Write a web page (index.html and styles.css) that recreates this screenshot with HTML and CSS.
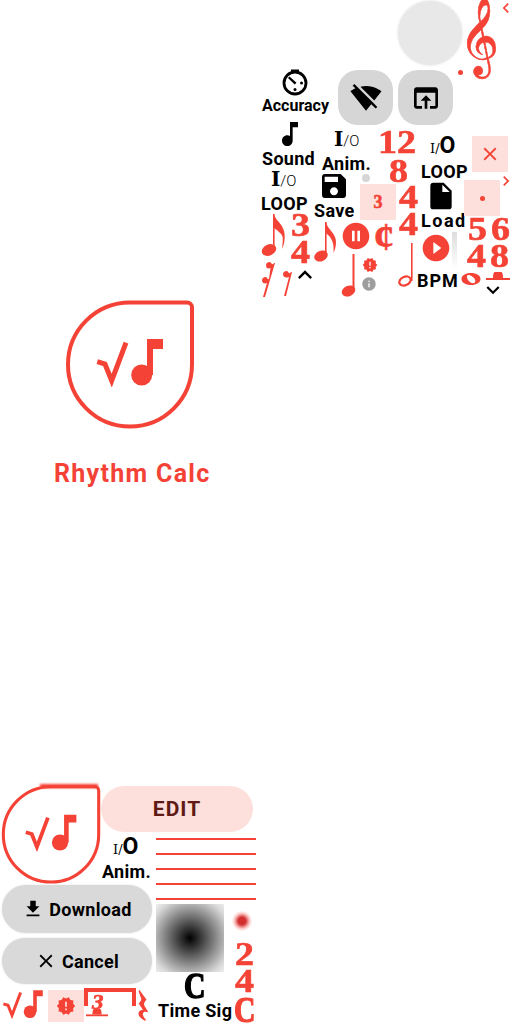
FILE: index.html
```html
<!DOCTYPE html>
<html lang="en">
<head>
    <meta charset="UTF-8">
    <title>Rhythm Calc</title>
    <link rel="stylesheet" href="styles.css">
</head>
<body>
    <svg class="defs" aria-hidden="true">
        <symbol id="i-note" viewBox="0 0 24 24"><path d="M12 3v10.55c-.59-.34-1.27-.55-2-.55-2.21 0-4 1.79-4 4s1.79 4 4 4 4-1.79 4-4V7h4V3h-6z"/></symbol>
        <symbol id="i-wifi" viewBox="0 0 24 24"><path d="M23.64 7c-.45-.34-4.93-4-11.64-4-1.5 0-2.89.19-4.15.48L18.18 13.8 23.64 7zm-6.6 8.22L3.27 1.44 2 2.72l2.05 2.06C1.91 5.76.59 6.82.36 7l11.63 14.49.01.01.01-.01 3.9-4.86 3.32 3.32 1.27-1.27-3.46-3.46z"/></symbol>
        <symbol id="i-open" viewBox="0 0 24 24"><path d="M19 4H5c-1.11 0-2 .9-2 2v12c0 1.1.89 2 2 2h4v-2H5V8h14v10h-4v2h4c1.1 0 2-.9 2-2V6c0-1.1-.89-2-2-2zm-7 6l-4 4h3v6h2v-6h3l-4-4z"/></symbol>
        <symbol id="i-save" viewBox="0 0 24 24"><path d="M17 3H5c-1.11 0-2 .9-2 2v14c0 1.1.89 2 2 2h14c1.1 0 2-.9 2-2V7l-4-4zm-5 16c-1.66 0-3-1.34-3-3s1.34-3 3-3 3 1.34 3 3-1.34 3-3 3zm3-10H5V5h10v4z"/></symbol>
        <symbol id="i-file" viewBox="0 0 24 24"><path d="M6 2c-1.1 0-1.99.9-1.99 2L4 20c0 1.1.89 2 1.99 2H18c1.1 0 2-.9 2-2V8l-6-6H6zm7 7V3.5L18.5 9H13z"/></symbol>
        <symbol id="i-pause" viewBox="0 0 24 24"><path d="M12 2C6.48 2 2 6.48 2 12s4.48 10 10 10 10-4.48 10-10S17.52 2 12 2zm-1 14H9V8h2v8zm4 0h-2V8h2v8z"/></symbol>
        <symbol id="i-play" viewBox="0 0 24 24"><path d="M12 2C6.48 2 2 6.48 2 12s4.48 10 10 10 10-4.48 10-10S17.52 2 12 2zm-2 14.5v-9l6 4.5-6 4.5z"/></symbol>
        <symbol id="i-close" viewBox="0 0 24 24"><path d="M19 6.41L17.59 5 12 10.59 6.41 5 5 6.41 10.59 12 5 17.59 6.41 19 12 13.41 17.59 19 19 17.59 13.41 12z"/></symbol>
        <symbol id="i-download" viewBox="0 0 24 24"><path d="M19 9h-4V3H9v6H5l7 7 7-7zM5 18v2h14v-2H5z"/></symbol>
        <symbol id="i-info" viewBox="0 0 24 24"><path d="M12 2C6.48 2 2 6.48 2 12s4.48 10 10 10 10-4.48 10-10S17.52 2 12 2zm1 15h-2v-6h2v6zm0-8h-2V7h2v2z"/></symbol>
        <symbol id="i-badge" viewBox="0 0 24 24"><path d="M23 12l-2.44-2.78.34-3.68-3.61-.82-1.89-3.18L12 3 8.6 1.54 6.71 4.72l-3.61.81.34 3.68L1 12l2.44 2.78-.34 3.69 3.61.82 1.89 3.18L12 21l3.4 1.46 1.89-3.18 3.61-.82-.34-3.68L23 12zm-10 5h-2v-2h2v2zm0-4h-2V7h2v6z"/></symbol>
        <symbol id="i-up" viewBox="0 0 24 24"><path d="M7.41 15.41L12 10.83l4.59 4.58L18 14l-6-6-6 6z"/></symbol>
        <symbol id="i-down" viewBox="0 0 24 24"><path d="M7.41 8.59L12 13.17l4.59-4.58L18 10l-6 6-6-6z"/></symbol>
        <symbol id="i-left" viewBox="0 0 24 24"><path d="M15.41 7.41L14 6l-6 6 6 6 1.41-1.41L10.83 12z"/></symbol>
        <symbol id="i-right" viewBox="0 0 24 24"><path d="M10 6L8.59 7.41 13.17 12l-4.58 4.59L10 18l6-6z"/></symbol>
        <symbol id="i-timer" viewBox="0 0 28 28">
            <circle cx="14" cy="15" r="11" fill="none" stroke="currentColor" stroke-width="2.800"/>
            <path d="M10 1.500h8v3h-8zM8.500 8.500l7 6.200-1.800 1.800-6.700-6.500z"/>
            <circle cx="14" cy="21.500" r="1.500"/><circle cx="20.500" cy="15" r="1.500"/>
        </symbol>
        <symbol id="i-logo" viewBox="0 0 128 130">
            <path d="M64 3.500H121a5 5 0 0 1 5 5V65.500A62 62 0 1 1 64 3.500Z" fill="none" stroke="currentColor" stroke-width="4"/>
            <use href="#i-sqrt" x="29" y="38" width="70" height="50"/>
        </symbol>
        <symbol id="i-sqrt" viewBox="0 0 70 50">
            <path d="M2.300 24.700 10 27l6.700 16.700L31 5.700" fill="none" stroke="currentColor" stroke-width="5"/>
            <path d="M52 2h16v10h-10v26h-6z"/>
            <circle cx="46.700" cy="38" r="10.500"/>
        </symbol>
        <symbol id="i-n4" viewBox="0 0 16 44"><rect x="11.500" y="0" width="2" height="38"/><ellipse cx="7.500" cy="37" rx="7" ry="5.200" transform="rotate(-25 7.500 37)"/></symbol>
        <symbol id="i-n8" viewBox="0 0 24 42"><rect x="11" y="0" width="1.600" height="34"/><ellipse cx="7" cy="34" rx="7" ry="5.200" transform="rotate(-25 7 34)"/><path d="M12 0c1 7 10 11 10 20 0 4-1 8-2.500 11 .8-10-1.500-15-7.500-20z"/></symbol>
        <symbol id="i-n16" viewBox="0 0 26 44"><rect x="12" y="0" width="1.600" height="36"/><ellipse cx="8" cy="36" rx="7.500" ry="5.500" transform="rotate(-25 8 36)"/><path d="M13 0c1 6 8 9 10 17 1.500 6 .5 13-2 18 .5-6 1.500-11 0-15-1.500-3-4.500-5-8-8z"/><path d="M13 9c2 4 7 6 9 11v3c-2-4-5-6-9-9z"/></symbol>
        <symbol id="i-n2" viewBox="0 0 18 46"><rect x="14" y="0" width="1.600" height="38"/><ellipse cx="8" cy="38" rx="6" ry="4.200" transform="rotate(-25 8 38)" fill="none" stroke="currentColor" stroke-width="2.200"/></symbol>
        <symbol id="i-n1" viewBox="0 0 20 14"><path fill-rule="evenodd" d="M10 1c5.500 0 9.500 2.500 9.500 6s-4 6-9.500 6S.5 10.500.5 7 4.500 1 10 1zM7 3c-1.500.5-1.500 2.500 0 5s4 3.500 6 3 1.500-3 0-5-4.500-3.500-6-3z"/></symbol>
        <symbol id="i-hrest" viewBox="0 0 24 14"><rect x="0" y="8" width="24" height="2"/><path d="M7 8c0-5 1-6 2-6h6c1 0 2 1 2 6z"/></symbol>
        <symbol id="i-r8" viewBox="0 0 10 26"><path d="M1 4a3 3 0 0 1 5.500-1.500c.8 1 1.500 1.200 2.500-.5h1L4 26H2L7 7C5 8 1 8 1 4z"/></symbol>
        <symbol id="i-r16" viewBox="0 0 14 36"><path d="M4 4a3 3 0 0 1 5.500-1.500c.8 1 1.500 1.200 2.500-.5h1L3 36H1l4-14c-2 1-5 .5-5-3a3 3 0 0 1 5.500-1.500c.5.600 1 .8 1.500.5L8.500 7C6.500 8 4 7.500 4 4z"/></symbol>
        <symbol id="i-r4" viewBox="0 0 12 36"><path d="M2 0l8 11c-3 3-4 5-1 9l3 5c-3-1-7-1-6 3 .3 2 2 4 3 5v2C4 33 .5 29 1 26c.5-3 3-4 5-3.500L1 15c3-2 4-5 2-8L1 1z"/></symbol>
    </svg>

    <!-- Hoja de recursos: cada pieza tiene su sitio en el lienzo -->
    <main class="sheet">
        <div class="blob"></div>
        <span class="glyph clef">𝄞</span>
        <span class="reddot dot-clef"></span>
        <svg class="ic red chev-left"><use href="#i-left"/></svg>
        <svg class="ic red chev-right"><use href="#i-right"/></svg>

        <svg class="ic timer"><use href="#i-timer"/></svg>
        <span class="lbl accuracy">Accuracy</span>
        <div class="tile tile-wifi"><svg class="ic tile-ic"><use href="#i-wifi"/></svg></div>
        <div class="tile tile-open"><svg class="ic tile-ic"><use href="#i-open"/></svg></div>

        <svg class="ic note-sound"><use href="#i-note"/></svg>
        <span class="lbl sound">Sound</span>
        <span class="io io-a"><b>I</b>/O</span>
        <span class="lbl anim-a">Anim.</span>
        <span class="num n12">12</span>
        <span class="num n8a">8</span>
        <span class="oi oi-a">I/<b>O</b></span>
        <span class="lbl loop-a">LOOP</span>
        <div class="pink box-x"><svg class="ic red x-ic"><use href="#i-close"/></svg></div>
        <span class="graydot"></span>
        <svg class="ic save-ic"><use href="#i-save"/></svg>
        <span class="io io-b"><b>I</b>/O</span>
        <span class="lbl loop-b">LOOP</span>
        <span class="lbl save">Save</span>
        <div class="pink box-3"><span class="num small3">3</span></div>
        <span class="num n4a">4</span>
        <span class="num n4b">4</span>
        <svg class="ic file-ic"><use href="#i-file"/></svg>
        <span class="lbl load">Load</span>
        <div class="pink box-dot"><span class="reddot"></span></div>
        <span class="num n5">5</span>
        <span class="num n6">6</span>
        <span class="num n4c">4</span>
        <span class="num n8b">8</span>
        <span class="num n3">3</span>
        <span class="num n4d">4</span>

        <svg class="ic red s-n16"><use href="#i-n16"/></svg>
        <svg class="ic red s-n8"><use href="#i-n8"/></svg>
        <svg class="ic red pause"><use href="#i-pause"/></svg>
        <span class="num cut">¢</span>
        <svg class="ic red play"><use href="#i-play"/></svg>
        <div class="fade"></div>
        <svg class="ic red s-n2"><use href="#i-n2"/></svg>
        <svg class="ic red s-n4"><use href="#i-n4"/></svg>
        <svg class="ic red badge-a"><use href="#i-badge"/></svg>
        <svg class="ic info"><use href="#i-info"/></svg>
        <svg class="ic red r16"><use href="#i-r16"/></svg>
        <svg class="ic red r8"><use href="#i-r8"/></svg>
        <svg class="ic up"><use href="#i-up"/></svg>
        <span class="lbl bpm">BPM</span>
        <svg class="ic red whole"><use href="#i-n1"/></svg>
        <svg class="ic red hrest-a"><use href="#i-hrest"/></svg>
        <svg class="ic down"><use href="#i-down"/></svg>

        <svg class="ic red logo-big"><use href="#i-logo"/></svg>
        <span class="title">Rhythm Calc</span>

        <div class="logo-bar"></div>
        <svg class="ic red logo-small"><use href="#i-logo"/></svg>
        <button class="pill edit">EDIT</button>
        <span class="oi oi-b">I/<b>O</b></span>
        <span class="lbl anim-b">Anim.</span>
        <div class="staff"><i></i><i></i><i></i><i></i><i></i></div>
        <button class="pill gray download"><svg class="ic btn-ic"><use href="#i-download"/></svg>Download</button>
        <button class="pill gray cancel"><svg class="ic btn-ic"><use href="#i-close"/></svg>Cancel</button>
        <div class="radial"></div>
        <div class="glow"></div>
        <span class="num n2">2</span>
        <span class="num n4e">4</span>
        <span class="num cc">C</span>
        <span class="num cblack">C</span>
        <span class="lbl timesig">Time Sig</span>
        <svg class="ic red sqrt-note"><use href="#i-sqrt"/></svg>
        <div class="pink box-badge"><svg class="ic red badge-b"><use href="#i-badge"/></svg></div>
        <div class="bracket"></div>
        <span class="num tuplet">3</span>
        <svg class="ic red hrest-b"><use href="#i-hrest"/></svg>
        <svg class="ic red r4"><use href="#i-r4"/></svg>
    </main>
</body>
</html>
```

FILE: styles.css
```css
body {
    margin: 0;
    background: white;
    font-family: "Roboto", "Inter", sans-serif;
    color: black;
}
.defs {
    position: absolute;
    width: 0;
    height: 0;
}
.sheet {
    position: relative;
    width: 512px;
    height: 1024px;
    overflow: hidden;
}
.sheet > * {
    position: absolute;
}
.ic {
    display: block;
    fill: currentColor;
}
.red {
    color: #f44336;
}
.lbl {
    font-size: 18px;
    font-weight: 700;
    line-height: 20px;
    letter-spacing: .3px;
    white-space: nowrap;
}
.num {
    font-family: "Liberation Serif", serif;
    font-size: 33px;
    font-weight: 700;
    color: #f44336;
    line-height: 1;
    transform: scaleX(1.15);
    transform-origin: left center;
    -webkit-text-stroke: .6px currentColor;
}
.pink {
    background: #fde0dc;
    display: flex;
    align-items: center;
    justify-content: center;
}
.reddot {
    display: block;
    width: 5px;
    height: 5px;
    border-radius: 50%;
    background: #f44336;
}

/* parte de arriba */
.blob { left: 398px; top: 1px; width: 64px; height: 64px; border-radius: 50%; background: #e8e8e8; box-shadow: 0 0 2px 1px #eee; }
.glyph { font-family: "DejaVu Sans", sans-serif; color: #f44336; line-height: 1; -webkit-text-stroke: .5px currentColor; }
.clef { left: 459px; top: 2px; font-size: 68px; }
.dot-clef { left: 458px; top: 70px; }
.chev-left { left: 496px; top: -2px; width: 20px; height: 20px; }
.chev-right { left: 496px; top: 171px; width: 20px; height: 20px; }
.timer { left: 281px; top: 68px; width: 28px; height: 28px; }
.accuracy { left: 262px; top: 96px; font-size: 16px; letter-spacing: 0; }
.tile { display: flex; align-items: center; justify-content: center; width: 55px; height: 55px; border-radius: 20px; background: #d6d6d6; top: 70px; }
.tile-wifi { left: 338px; }
.tile-open { left: 398px; }
.tile-ic { width: 32px; height: 32px; }
.note-sound { left: 274px; top: 118px; width: 32px; height: 32px; }
.sound { left: 262px; top: 149px; }
.io { font-family: "Roboto", sans-serif; font-size: 15px; font-weight: 300; line-height: 20px; white-space: nowrap; }
.io b { font-family: "DejaVu Serif", serif; font-size: 20px; font-weight: 700; }
.io-a { left: 334px; top: 129px; }
.io-b { left: 271px; top: 169px; }
.anim-a { left: 322px; top: 154px; }
.n12 { left: 378px; top: 126px; }
.n8a { left: 389px; top: 155px; }
.oi { font-family: "DejaVu Serif", serif; font-size: 13px; line-height: 24px; white-space: nowrap; }
.oi b { font-family: "Roboto", sans-serif; font-size: 23px; }
.oi-a { left: 430px; top: 134px; }
.loop-a { left: 421px; top: 162px; }
.box-x { left: 472px; top: 136px; width: 36px; height: 36px; }
.x-ic { width: 22px; height: 22px; }
.graydot { left: 362px; top: 174px; width: 8px; height: 8px; border-radius: 50%; background: #d6d6d6; }
.save-ic { left: 318px; top: 170px; width: 32px; height: 32px; }
.loop-b { left: 261px; top: 194px; }
.save { left: 314px; top: 201px; }
.box-3 { left: 360px; top: 184px; width: 36px; height: 36px; }
.small3 { font-size: 18px; transform: none; }
.n4a { left: 399px; top: 181px; }
.n4b { left: 399px; top: 208px; }
.file-ic { left: 425px; top: 180px; width: 32px; height: 32px; }
.load { left: 421px; top: 211px; letter-spacing: 1.500px; }
.box-dot { left: 464px; top: 180px; width: 36px; height: 36px; }
.n5 { left: 468px; top: 213px; }
.n6 { left: 491px; top: 213px; }
.n4c { left: 467px; top: 240px; }
.n8b { left: 490px; top: 240px; }
.n3 { left: 291px; top: 209px; }
.n4d { left: 291px; top: 236px; }
.s-n16 { left: 261px; top: 214px; width: 26px; height: 44px; }
.s-n8 { left: 314px; top: 222px; width: 24px; height: 42px; }
.pause { left: 340px; top: 220px; width: 32px; height: 32px; }
.cut { left: 374px; top: 217px; font-size: 40px; transform: none; }
.play { left: 420px; top: 232px; width: 32px; height: 32px; }
.fade { left: 452px; top: 232px; width: 5px; height: 38px; background: linear-gradient(#ddd, white); }
.s-n2 { left: 397px; top: 243px; width: 18px; height: 46px; }
.s-n4 { left: 341px; top: 254px; width: 16px; height: 44px; }
.badge-a { left: 362px; top: 257px; width: 16px; height: 16px; }
.info { left: 361px; top: 276px; width: 16px; height: 16px; color: #9e9e9e; }
.r16 { left: 262px; top: 261px; width: 14px; height: 36px; }
.r8 { left: 282px; top: 270px; width: 10px; height: 26px; }
.up { left: 291px; top: 261px; width: 28px; height: 28px; }
.bpm { left: 417px; top: 271px; letter-spacing: 1px; }
.whole { left: 461px; top: 272px; width: 20px; height: 14px; }
.hrest-a { left: 486px; top: 270px; width: 24px; height: 14px; }
.down { left: 480px; top: 277px; width: 26px; height: 26px; }

/* logo grande */
.logo-big { left: 66px; top: 299px; width: 128px; height: 130px; }
.title { left: 54px; top: 459px; font-size: 25px; font-weight: 700; line-height: 30px; letter-spacing: 1.300px; color: #f44336; white-space: nowrap; }

/* parte de abajo */
.logo-bar { left: 40px; top: 784px; width: 58px; height: 4px; background: #f44336; filter: blur(1px); }
.logo-small { left: 1px; top: 784px; width: 100px; height: 100px; }
.pill {
    border: none;
    padding: 0;
    display: flex;
    align-items: center;
    justify-content: center;
    font-family: inherit;
    font-weight: 700;
}
.edit { left: 101px; top: 786px; width: 152px; height: 46px; border-radius: 23px; background: #fde0dc; color: #5f1a14; font-size: 21px; letter-spacing: 1px; }
.gray { left: 2px; width: 150px; border-radius: 24px; background: #d9d9d9; font-size: 18px; gap: 5px; letter-spacing: .3px; box-shadow: 0 0 2px #ddd; color: black; }
.download { top: 885px; height: 48px; }
.cancel { top: 938px; height: 46px; }
.btn-ic { width: 22px; height: 22px; }
.oi-b { left: 113px; top: 835px; }
.anim-b { left: 102px; top: 862px; }
.staff { left: 156px; top: 838px; width: 100px; display: flex; flex-direction: column; gap: 13px; }
.staff i { display: block; height: 2px; background: #f44336; }
.radial { left: 156px; top: 904px; width: 68px; height: 68px; background: radial-gradient(circle, black 0, #d8d8d8 85%, #eee 100%); }
.glow { left: 232px; top: 911px; width: 20px; height: 20px; border-radius: 50%; background: radial-gradient(circle, #d32f2f 25%, rgba(244, 67, 54, .25) 55%, transparent 75%); }
.n2 { left: 235px; top: 938px; }
.n4e { left: 235px; top: 965px; }
.cc { left: 234px; top: 993px; font-size: 35px; transform: scaleX(.85); -webkit-text-stroke: 1.200px currentColor; }
.cblack { left: 184px; top: 969px; font-size: 35px; color: black; transform: scaleX(.85); -webkit-text-stroke: 1.400px currentColor; }
.timesig { left: 158px; top: 1001px; }
.sqrt-note { left: 2px; top: 988px; width: 42px; height: 32px; }
.box-badge { left: 48px; top: 990px; width: 36px; height: 32px; }
.badge-b { width: 20px; height: 20px; }
.bracket { left: 84px; top: 988px; width: 52px; height: 18px; box-sizing: border-box; border: 4px solid #f44336; border-bottom: none; }
.tuplet { left: 92px; top: 992px; font-size: 20px; font-style: italic; }
.hrest-b { left: 86px; top: 1007px; width: 22px; height: 13px; }
.r4 { left: 137px; top: 990px; width: 12px; height: 32px; }
```
